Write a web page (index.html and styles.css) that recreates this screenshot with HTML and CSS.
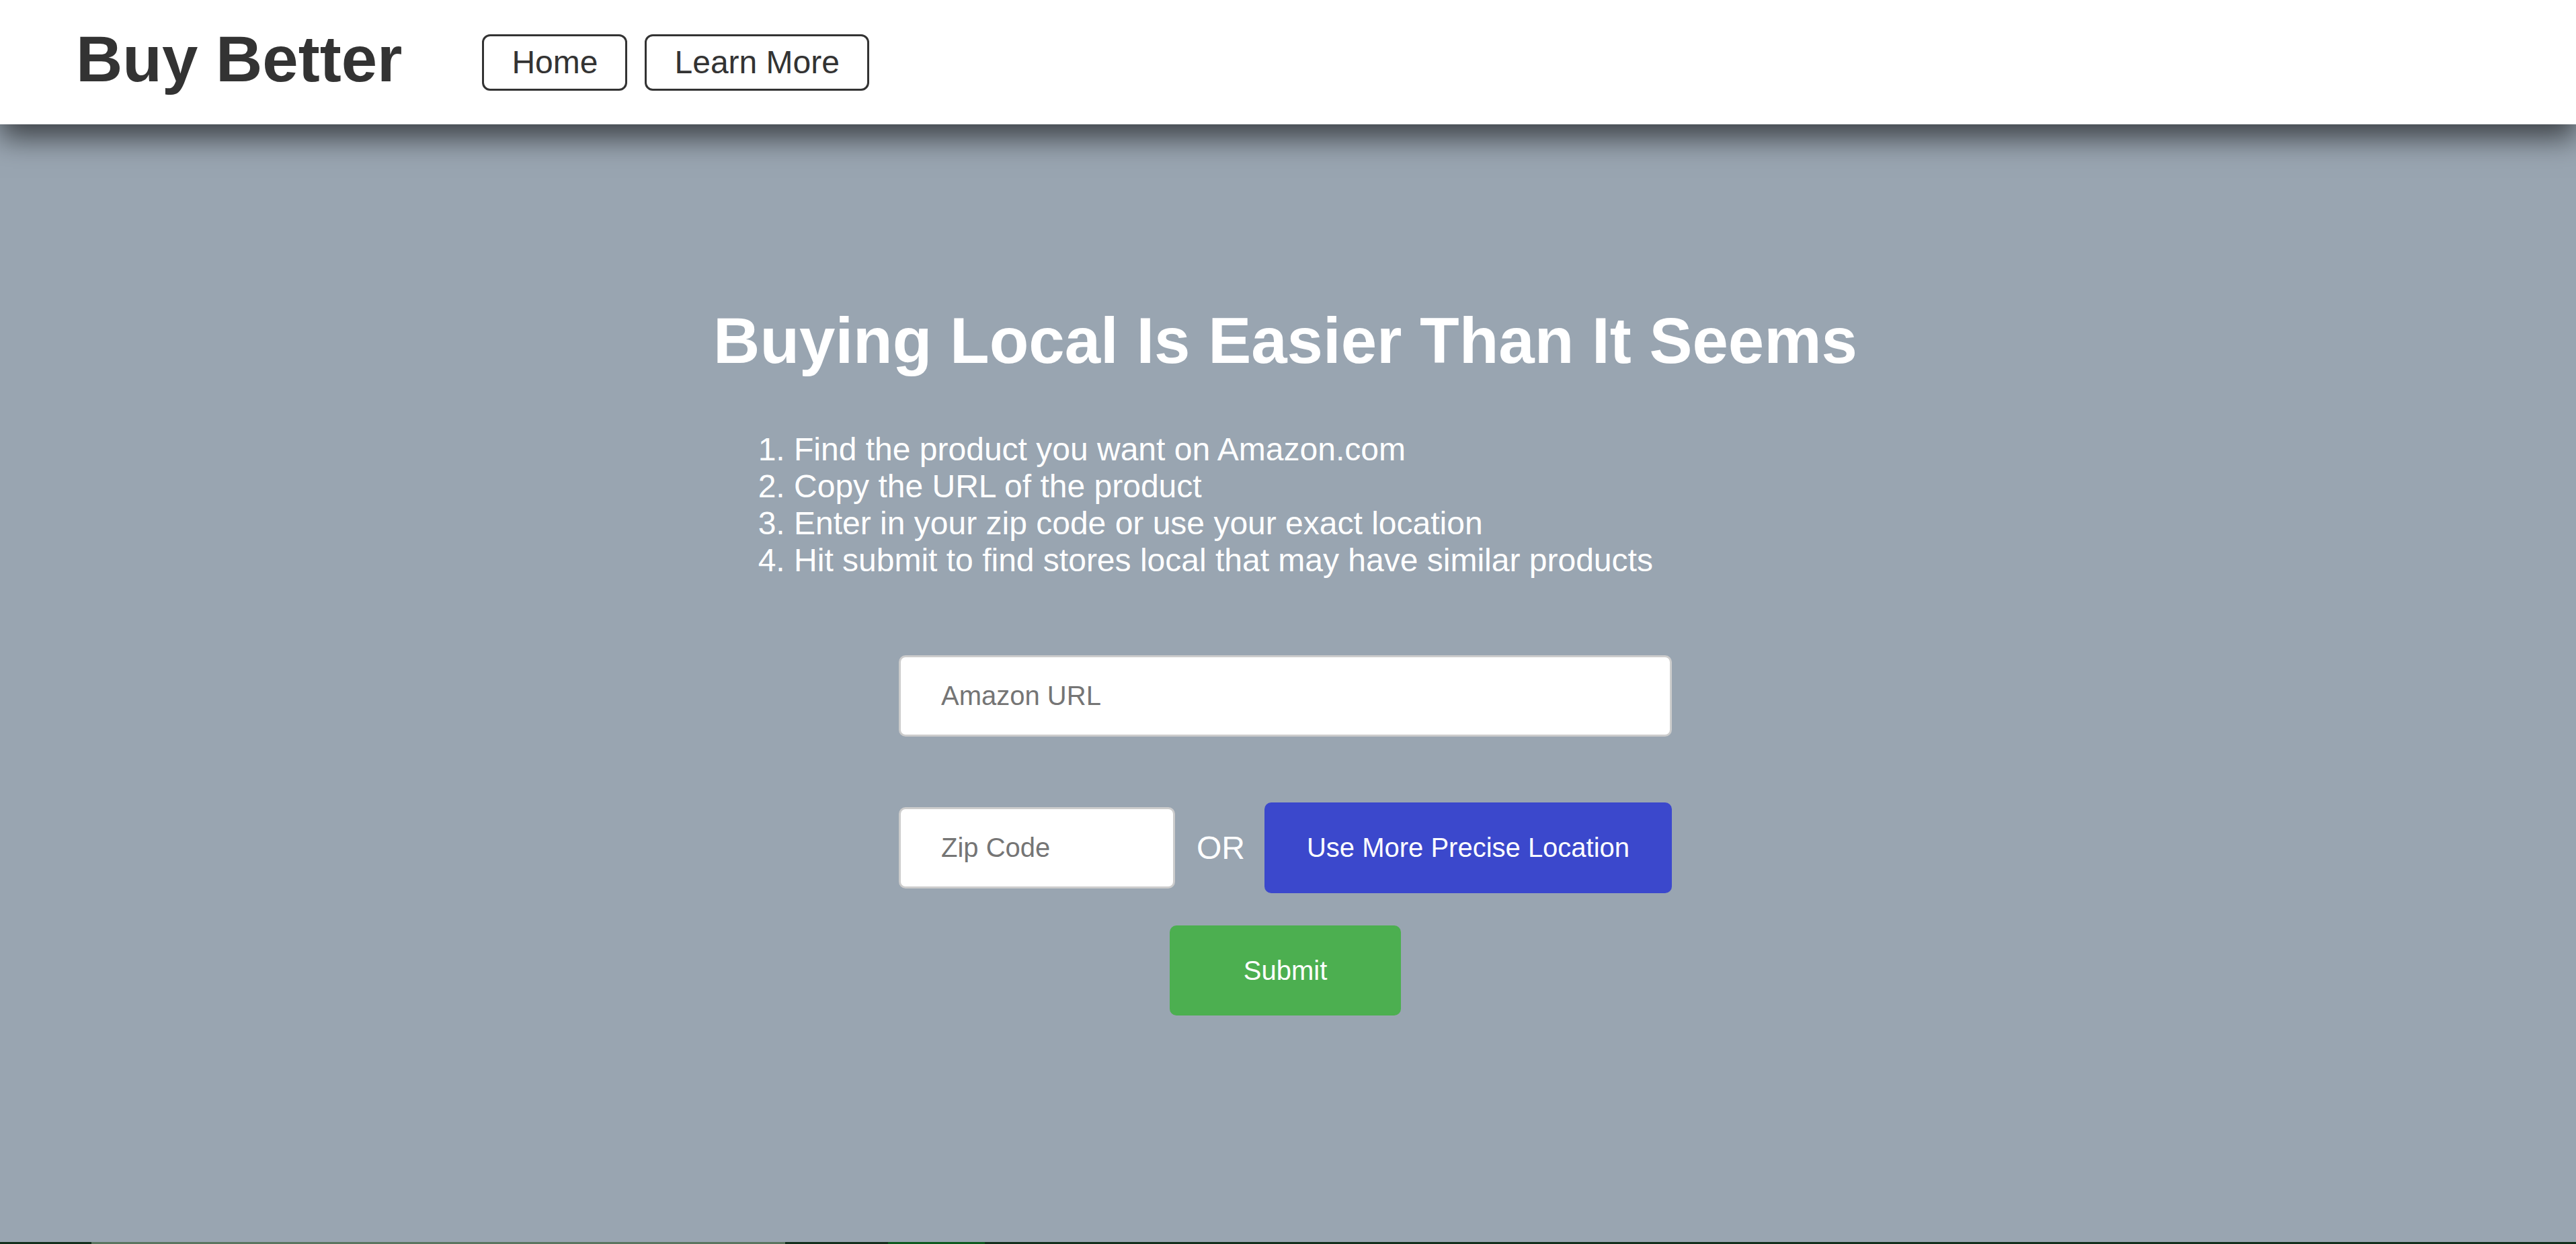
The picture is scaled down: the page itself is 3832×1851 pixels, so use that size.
FILE: index.html
```html
<!DOCTYPE html>
<html lang="en">
<head>
<meta charset="utf-8">
<title>Buy Better</title>
<link rel="stylesheet" href="styles.css">
</head>
<body>
<header class="topbar">
  <div class="logo">Buy Better</div>
  <nav class="nav">
    <button class="nav-btn">Home</button>
    <button class="nav-btn">Learn More</button>
  </nav>
</header>
<main class="main">
  <section class="hero">
    <h1 class="title">Buying Local Is Easier Than It Seems</h1>
    <ol class="steps">
      <li>Find the product you want on Amazon.com</li>
      <li>Copy the URL of the product</li>
      <li>Enter in your zip code or use your exact location</li>
      <li>Hit submit to find stores local that may have similar products</li>
    </ol>
  </section>
  <form class="form">
    <input class="field field-url" type="text" placeholder="Amazon URL">
    <div class="row">
      <input class="field field-zip" type="text" placeholder="Zip Code">
      <span class="or">OR</span>
      <button type="button" class="btn btn-location">Use More Precise Location</button>
    </div>
    <button type="button" class="btn btn-submit">Submit</button>
  </form>
</main>
<div class="footer-strip"></div>
</body>
</html>
```
FILE: styles.css
```css
* { box-sizing: border-box; }
html, body { margin: 0; padding: 0; }
body {
  font-family: "Liberation Sans", Arial, sans-serif;
  background: #99a5b1;
  color: #333;
}
.topbar {
  position: relative;
  z-index: 1;
  height: 185px;
  background: #fff;
  display: flex;
  align-items: center;
  padding-left: 113px;
  box-shadow: 0 20px 40px rgba(0, 0, 0, 0.6);
}
.logo {
  font-size: 96px;
  font-weight: bold;
  color: #333;
  line-height: 110px;
  padding-bottom: 10px;
}
.nav {
  display: flex;
  gap: 26px;
  margin-left: 119px;
}
.nav-btn {
  font-family: "Liberation Sans", Arial, sans-serif;
  font-size: 48px;
  line-height: 55px;
  color: #333;
  background: #fff;
  border: 3px solid #333;
  border-radius: 12px;
  padding: 11px 41px;
  height: 84px;
}
.main {
  height: 1663px;
  display: flex;
  flex-direction: column;
  align-items: center;
  padding-top: 267px;
  padding-right: 8px;
}
.hero {
  display: flex;
  flex-direction: column;
}
.title {
  margin: 0;
  font-size: 96px;
  line-height: 110px;
  font-weight: bold;
  color: #fff;
  white-space: nowrap;
}
.steps {
  margin: 79px 0 0 0;
  padding-left: 120px;
  font-size: 48px;
  line-height: normal;
  color: #fff;
}
.form {
  width: 1150px;
  margin-top: 114px;
  display: flex;
  flex-direction: column;
}
.field {
  height: 121px;
  border: 3px solid #ccc;
  border-radius: 10px;
  background: #fff;
  padding: 0 0 0 60px;
  font-family: "Liberation Sans", Arial, sans-serif;
  font-size: 40px;
  color: #333;
  outline: none;
}
.field::placeholder { color: #757575; }
.field-url { width: 100%; }
.row {
  margin-top: 98px;
  display: flex;
  align-items: center;
}
.field-zip { width: 411px; }
.or {
  font-size: 48px;
  color: #fff;
  margin: 0 29px 0 32px;
}
.btn {
  font-family: "Liberation Sans", Arial, sans-serif;
  font-size: 40px;
  color: #fff;
  border: none;
  border-radius: 10px;
}
.btn-location {
  width: 606px;
  height: 135px;
  background: #3b48cc;
}
.btn-submit {
  align-self: center;
  width: 344px;
  height: 134px;
  margin-top: 48px;
  background: #4caf50;
}
.footer-strip {
  height: 40px;
  background: linear-gradient(to right,
    #13301d 0, #13301d 136px,
    #5a7560 136px, #5a7560 1168px,
    #13301d 1168px, #13301d 1321px,
    #0d5a1f 1321px, #0d5a1f 1465px,
    #13301d 1465px, #13301d 100%);
}
```
